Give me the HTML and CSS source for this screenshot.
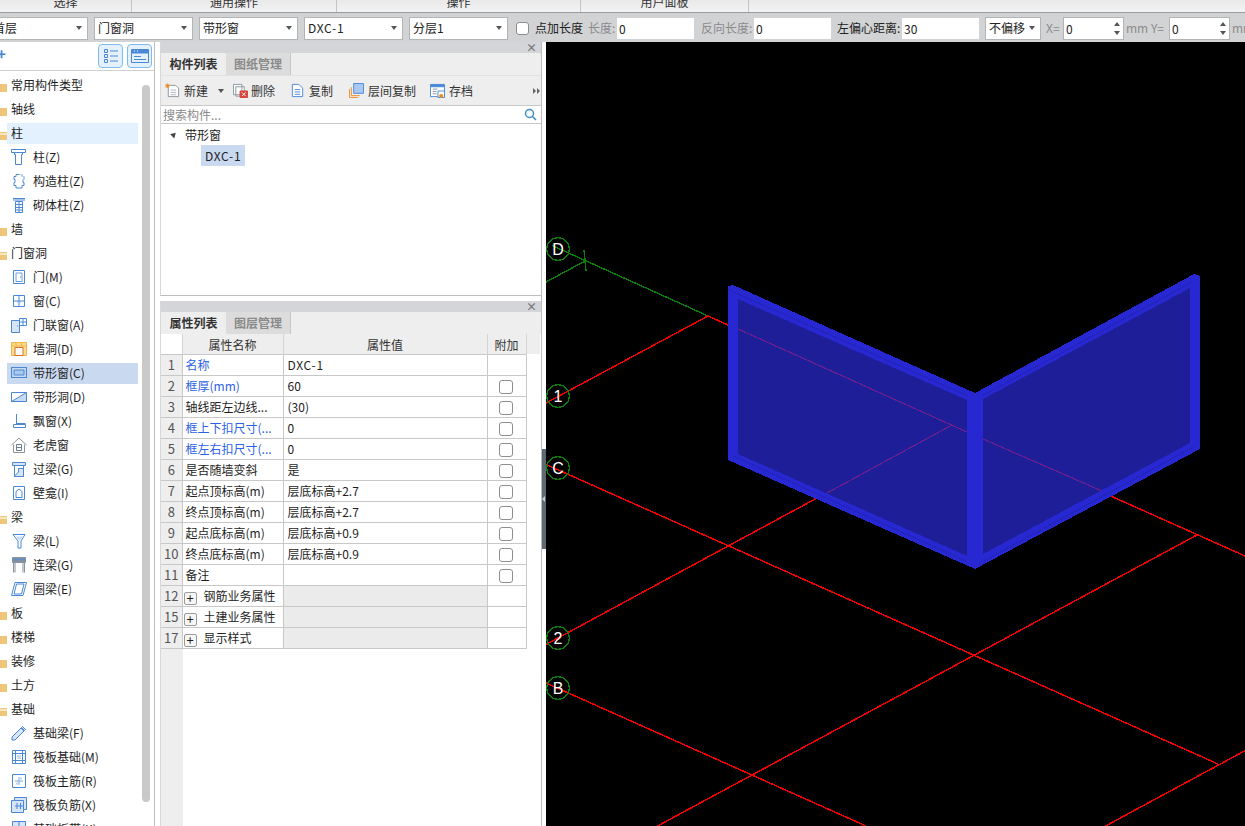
FILE: index.html
```html
<!DOCTYPE html>
<html lang="zh-CN">
<head>
<meta charset="utf-8">
<title>带形窗</title>
<link rel="stylesheet" href="styles.css">
</head>
<body>
<div class="app">
  <div class="ribbon">
    <div class="rgroup g1"><span>选择</span></div>
    <div class="rgroup g2"><span>通用操作</span></div>
    <div class="rgroup g3"><span>操作</span></div>
    <div class="rgroup g4"><span>用户面板</span></div>
  </div>
  <div class="toolbar">
    <div class="combo first"><span>首层</span><i class="caret"></i></div>
    <div class="combo"><span>门窗洞</span><i class="caret"></i></div>
    <div class="combo"><span>带形窗</span><i class="caret"></i></div>
    <div class="combo"><span class="latin">DXC-1</span><i class="caret"></i></div>
    <div class="combo"><span>分层1</span><i class="caret"></i></div>
    <i class="check tcheck"></i>
    <span class="tl l-add">点加长度</span>
    <span class="tl dim l-len">长度:</span>
    <div class="tinput w78">0</div>
    <span class="tl dim l-rev">反向长度:</span>
    <div class="tinput w78">0</div>
    <span class="tl l-off">左偏心距离:</span>
    <div class="tinput w78">30</div>
    <div class="combo small"><span>不偏移</span><i class="caret"></i></div>
    <span class="tl dim l-x">X=</span>
    <div class="tinput spin">0<b class="spinbtn"><i class="up"></i><i class="down"></i></b></div>
    <span class="tl dim l-mm">mm</span>
    <span class="tl dim l-y">Y=</span>
    <div class="tinput spin">0<b class="spinbtn"><i class="up"></i><i class="down"></i></b></div>
    <span class="tl dim l-mm">mm</span>
  </div>

  <div class="main">
    <aside class="sidebar">
      <div class="side-head">
        <span class="plus">+</span>
        <button class="vbtn"><svg width="16" height="16" viewBox="0 0 16 16" fill="none" stroke="#4a88d6"><path d="M1.500 1.500h3v3h-3zM1.500 6.500h3v3h-3zM1.500 11.500h3v3h-3zM7 3h8M7 8h8M7 13h8"/></svg></button>
        <button class="vbtn"><svg width="18" height="16" viewBox="0 0 18 16" fill="none" stroke="#4a88d6"><path d="M.5 1.500h17v13H.5z"/><path d="M1 2h16v3H1z" fill="#4a88d6"/><path d="M3 8.500h7M3 11.500h12"/><path d="M3 3h1M6 3h1" stroke="#fff"/></svg></button>
      </div>
      <div class="side-body">
        <ul class="tree">
          <li class="row"><svg class="folder" viewBox="0 0 14 11"><path d="M0 1h6l1 2h7v8H0z" fill="#efc679"/></svg>常用构件类型</li>
          <li class="row"><svg class="folder" viewBox="0 0 14 11"><path d="M0 1h6l1 2h7v8H0z" fill="#efc679"/></svg>轴线</li>
          <li class="row hl"><svg class="folder" viewBox="0 0 14 11"><path d="M0 1h6l1 2h7v8H0z" fill="#efc679"/><path d="M0 4h14v2H0z" fill="#fbe7bd"/></svg>柱</li>
          <li class="row sub"><svg class="ico" viewBox="0 0 16 16" fill="none" stroke="#4a88d6"><path d="M.5 .5h14v3H.5zM3.500 3.500v2h1v10h6v-10h1v-2"/></svg>柱(Z)</li>
          <li class="row sub"><svg class="ico" viewBox="0 0 16 16" fill="none" stroke="#4a88d6"><path d="M5 1.500h6v2h2v3h-1v3h1v3h-2v2.500H5v-2.500H3v-3h1v-3H3v-3h2z"/><path d="M8 1.500h3v2h2v3h-1" stroke="#b8d0ee"/></svg>构造柱(Z)</li>
          <li class="row sub"><svg class="ico" viewBox="0 0 16 16" fill="none" stroke="#4a88d6"><path d="M2 1.500h12M2 3h12"/><path d="M4.500 4.500h7v11h-7zM4.500 7.500h7M4.500 10.500h7M4.500 13h7M8 4.500v11"/></svg>砌体柱(Z)</li>
          <li class="row"><svg class="folder" viewBox="0 0 14 11"><path d="M0 1h6l1 2h7v8H0z" fill="#efc679"/></svg>墙</li>
          <li class="row"><svg class="folder" viewBox="0 0 14 11"><path d="M0 1h6l1 2h7v8H0z" fill="#efc679"/><path d="M0 4h14v2H0z" fill="#fbe7bd"/></svg>门窗洞</li>
          <li class="row sub"><svg class="ico" viewBox="0 0 16 16" fill="none" stroke="#4a88d6"><path d="M2.500 1.500h11v13h-11z"/><path d="M5 4h6v8.500H5z" stroke-width=".8"/><path d="M9 8h1"/></svg>门(M)</li>
          <li class="row sub"><svg class="ico" viewBox="0 0 16 16" fill="none" stroke="#4a88d6"><path d="M2.500 2.500h11v11h-11zM8 2.500v11M2.500 8h11"/><path d="M6 9h1M9 9h1" stroke="#8db4e6"/></svg>窗(C)</li>
          <li class="row sub"><svg class="ico" viewBox="0 0 16 16" fill="none" stroke="#4a88d6"><path d="M.5 3.500h8v12h-8z" fill="#d6e4f6"/><path d="M8.500 1.500h7v7h-7zM12 1.500v7M8.500 5h7"/><path d="M6 9h1"/></svg>门联窗(A)</li>
          <li class="row sub"><svg class="ico" viewBox="0 0 16 16" fill="#fbdc8e" stroke="#f2b544"><path d="M.5 1.500h15v13H.5zM.5 5h15M5 1.500V5M10.500 1.500V5"/><path d="M4 6.500h8v8H4z" fill="#fff" stroke="#d4722e"/></svg>墙洞(D)</li>
          <li class="row sub sel"><svg class="ico" viewBox="0 0 16 16" fill="none" stroke="#4a88d6"><path d="M.5 2.500h15v10H.5z" stroke-width="1.200"/><path d="M3 5h10v5H3z" fill="#a9c8ee"/></svg>带形窗(C)</li>
          <li class="row sub"><svg class="ico" viewBox="0 0 16 16" fill="none" stroke="#4a88d6"><path d="M.5 3.500h15v9H.5z"/><path d="M.5 12.500l15-9v9z" fill="#c7dbf4"/></svg>带形洞(D)</li>
          <li class="row sub"><svg class="ico" viewBox="0 0 16 16" fill="none" stroke="#4a88d6"><path d="M5.500 1v10M5.500 10.500h9M2.500 11.500h12v3h-12z"/></svg>飘窗(X)</li>
          <li class="row sub"><svg class="ico" viewBox="0 0 16 16" fill="none" stroke="#8c959e"><path d="M.5 8L8 1l7.500 7M2.500 7.500v8h11v-8"/><path d="M5.500 7.500h5v6h-5zM5.500 10.500h5" stroke="#6f8090"/></svg>老虎窗</li>
          <li class="row sub"><svg class="ico" viewBox="0 0 16 16" fill="none" stroke="#4a88d6"><path d="M1.500 1.500h13v3h-13z" fill="#d6e4f6"/><path d="M3.500 4.500v11h9v-11"/><path d="M3.500 15l4-4V7.500h5v8h-9z" fill="#d6e4f6"/></svg>过梁(G)</li>
          <li class="row sub"><svg class="ico" viewBox="0 0 16 16" fill="none" stroke="#4a88d6"><path d="M2.500 1.500h11v13h-11z"/><path d="M5 12.500V6.500L8 4l3 2.500v6z"/></svg>壁龛(I)</li>
          <li class="row"><svg class="folder" viewBox="0 0 14 11"><path d="M0 1h6l1 2h7v8H0z" fill="#efc679"/><path d="M0 4h14v2H0z" fill="#fbe7bd"/></svg>梁</li>
          <li class="row sub"><svg class="ico" viewBox="0 0 16 16" fill="none" stroke="#4a88d6"><path d="M2 1.500h12L10 8v7H7V8z"/><path d="M5 3.500h7L9 7H7.500z" fill="#c7dbf4" stroke="none"/></svg>梁(L)</li>
          <li class="row sub"><svg class="ico" viewBox="0 0 16 16" fill="none" stroke="#87929c"><path d="M1.500 .5h13v5h-13z" fill="#87929c"/><path d="M2 2.500h12" stroke="#5d8fcf" stroke-width="1.500"/><path d="M2.500 5.500v10M4 5.500v10M12 5.500v10M13.500 5.500v10"/></svg>连梁(G)</li>
          <li class="row sub"><svg class="ico" viewBox="0 0 16 16" fill="none" stroke="#4a88d6"><path d="M4 1.500h11.500L12 14.500H.5zM5.500 3h7.500L10.500 13H3z"/></svg>圈梁(E)</li>
          <li class="row"><svg class="folder" viewBox="0 0 14 11"><path d="M0 1h6l1 2h7v8H0z" fill="#efc679"/></svg>板</li>
          <li class="row"><svg class="folder" viewBox="0 0 14 11"><path d="M0 1h6l1 2h7v8H0z" fill="#efc679"/></svg>楼梯</li>
          <li class="row"><svg class="folder" viewBox="0 0 14 11"><path d="M0 1h6l1 2h7v8H0z" fill="#efc679"/></svg>装修</li>
          <li class="row"><svg class="folder" viewBox="0 0 14 11"><path d="M0 1h6l1 2h7v8H0z" fill="#efc679"/></svg>土方</li>
          <li class="row"><svg class="folder" viewBox="0 0 14 11"><path d="M0 1h6l1 2h7v8H0z" fill="#efc679"/><path d="M0 4h14v2H0z" fill="#fbe7bd"/></svg>基础</li>
          <li class="row sub"><svg class="ico" viewBox="0 0 16 16" fill="#d6e4f6" stroke="#4a88d6"><path d="M1 12l9-9 3 3-9 9H1zM11.500 1.500l3 3-1 1-3-3z"/></svg>基础梁(F)</li>
          <li class="row sub"><svg class="ico" viewBox="0 0 16 16" fill="none" stroke="#4a88d6"><path d="M1.500 1.500h13v13h-13zM1.500 4.500h13M1.500 11.500h13M4.500 1.500v13M11.500 1.500v13"/><path d="M6 7h4M6 9h4" stroke="#8db4e6"/></svg>筏板基础(M)</li>
          <li class="row sub"><svg class="ico" viewBox="0 0 16 16" fill="none" stroke="#4a88d6"><path d="M1.500 1.500h13v13h-13z"/><path d="M4 8h8M8 4v8M10 4.500v2M6 9.500v2" stroke="#7fa8dd"/></svg>筏板主筋(R)</li>
          <li class="row sub"><svg class="ico" viewBox="0 0 16 16" fill="#d6e4f6" stroke="#4a88d6"><path d="M3.500 .5h12v12h-3v3H.5V3.500h3z"/><path d="M3.500 3.500h9v9"/><path d="M4 9h8M6 6v6M9.500 6v6" fill="none"/></svg>筏板负筋(X)</li>
          <li class="row sub"><svg class="ico" viewBox="0 0 16 16" fill="#d6e4f6" stroke="#4a88d6"><path d="M1.500 .5h13v14h-13zM8 .5v14"/></svg>基础板带(K)</li>
        </ul>
        <div class="vscroll"></div>
      </div>
    </aside>

    <section class="panels">
      <div class="panel top">
        <div class="phead"><span class="x">×</span></div>
        <div class="tabs"><span class="tab on">构件列表</span><span class="tab">图纸管理</span></div>
        <div class="actions">
          <span class="act a-new"><svg class="ico15" viewBox="0 0 16 16" fill="#fff" stroke="#8a949c"><path d="M3.500 2.500h8l3 3v9h-11z"/><path d="M6 7.500h6M6 10h6M6 12.500h6" stroke="#aab2b8"/><path d="M0 3h5M2.500 .5v5M1 1l3 4M4 1L1 5" stroke="#f08a24"/></svg>新建<i class="caret dark"></i></span>
          <span class="act a-del"><svg class="ico15" viewBox="0 0 16 16" fill="#fff" stroke="#8a949c"><path d="M.5 1.500h9v11h-9zM3 4h9v10H3z"/><path d="M7.500 8.500h8v7h-8z" fill="#d8413a" stroke="#d8413a"/><path d="M9.500 10l4 4M13.500 10l-4 4" stroke="#fff"/></svg>删除</span>
          <span class="act a-copy"><svg class="ico15" viewBox="0 0 16 16" fill="#fff" stroke="#4a88d6"><path d="M2.500 1.500h7l4 4v9h-11z"/><path d="M5 7h6M5 9.500h6M5 12h6"/></svg>复制</span>
          <span class="act a-floor"><svg class="ico15" viewBox="0 0 16 16" fill="none" stroke="#f08a24"><path d="M.5 6.500v9h9M2.500 4.500v9h9"/><path d="M5 .5h10.500v10.500H5z" fill="#a9c8f2" stroke="#4a88d6"/></svg>层间复制</span>
          <span class="act a-save"><svg class="ico15" viewBox="0 0 16 16" fill="#fff" stroke="#4a88d6"><path d="M.5 1.500h15v13H.5z"/><path d="M1 2h14v2H1z" fill="#4a88d6"/><path d="M3 6.500h5M3 9h4M3 11.500h4" stroke="#8a949c"/><path d="M8.500 8.500h7v7h-7z"/><path d="M10.500 12.500h3v2.500h-3z" fill="#f08a24" stroke="#f08a24"/></svg>存档</span>
          <span class="more"><i></i><i></i></span>
        </div>
        <div class="search"><span>搜索构件...</span><svg width="13" height="13" viewBox="0 0 13 13" fill="none" stroke="#3a8fc8" stroke-width="1.500"><circle cx="5.500" cy="5.500" r="4"/><path d="M8.500 8.500l3.500 3.500"/></svg></div>
        <div class="ctree">
          <div class="cnode"><i class="tri"></i>带形窗</div>
          <div class="cleaf"><span class="latin">DXC-1</span></div>
        </div>
      </div>

      <div class="panel bottom">
        <div class="phead"><span class="x">×</span></div>
        <div class="tabs"><span class="tab on">属性列表</span><span class="tab">图层管理</span></div>
        <table class="props">
          <colgroup><col class="c0"><col class="c1"><col class="c2"><col class="c3"><col class="c4"></colgroup>
          <thead><tr><th class="blank"></th><th>属性名称</th><th>属性值</th><th>附加</th><th class="tail"></th></tr></thead>
          <tbody>
            <tr><td class="n">1</td><td class="link">名称</td><td class="v"><span class="latin">DXC-1</span></td><td></td><td class="tail"></td></tr>
            <tr><td class="n">2</td><td class="link">框厚(mm)</td><td class="v">60</td><td class="cc"><i class="check"></i></td><td class="tail"></td></tr>
            <tr><td class="n">3</td><td>轴线距左边线...</td><td class="v">(30)</td><td class="cc"><i class="check"></i></td><td class="tail"></td></tr>
            <tr><td class="n">4</td><td class="link">框上下扣尺寸(...</td><td class="v">0</td><td class="cc"><i class="check"></i></td><td class="tail"></td></tr>
            <tr><td class="n">5</td><td class="link">框左右扣尺寸(...</td><td class="v">0</td><td class="cc"><i class="check"></i></td><td class="tail"></td></tr>
            <tr><td class="n">6</td><td>是否随墙变斜</td><td class="v">是</td><td class="cc"><i class="check"></i></td><td class="tail"></td></tr>
            <tr><td class="n">7</td><td>起点顶标高(m)</td><td class="v">层底标高+2.7</td><td class="cc"><i class="check"></i></td><td class="tail"></td></tr>
            <tr><td class="n">8</td><td>终点顶标高(m)</td><td class="v">层底标高+2.7</td><td class="cc"><i class="check"></i></td><td class="tail"></td></tr>
            <tr><td class="n">9</td><td>起点底标高(m)</td><td class="v">层底标高+0.9</td><td class="cc"><i class="check"></i></td><td class="tail"></td></tr>
            <tr><td class="n">10</td><td>终点底标高(m)</td><td class="v">层底标高+0.9</td><td class="cc"><i class="check"></i></td><td class="tail"></td></tr>
            <tr><td class="n">11</td><td>备注</td><td class="v"></td><td class="cc"><i class="check"></i></td><td class="tail"></td></tr>
            <tr class="grp"><td class="n">12</td><td class="gn"><i class="pbox">+</i>钢筋业务属性</td><td class="gv"></td><td></td><td class="tail"></td></tr>
            <tr class="grp"><td class="n">15</td><td class="gn"><i class="pbox">+</i>土建业务属性</td><td class="gv"></td><td></td><td class="tail"></td></tr>
            <tr class="grp"><td class="n">17</td><td class="gn"><i class="pbox">+</i>显示样式</td><td class="gv"></td><td></td><td class="tail"></td></tr>
          </tbody>
        </table>
        <div class="gutter"></div>
      </div>
    </section>

    <div class="splitter"><div class="grip"><i></i></div></div>

    <div class="canvas">
      <svg class="cad" width="699" height="784" viewBox="546 42 699 784" shape-rendering="crispEdges">
        <defs>
          <polygon id="bub" points="11.500,0 10,5.750 5.750,10 0,11.500 -5.750,10 -10,5.750 -11.500,0 -10,-5.750 -5.750,-10 0,-11.500 5.750,-10 10,-5.750" fill="none" stroke="#0b7d0b" stroke-width="1.400"/>
        </defs>
        <g fill="none" stroke="#0b7d0b" stroke-width="1.400">
          <path d="M552 245.500L707 315.500M546 282L585 261M584 250L586 271"/>
        </g>
        <g fill="none" stroke="#f00000" stroke-width="1.500">
          <path d="M546 403L708 316L1245 556"/>
          <path d="M546 464.500L1218 764"/>
          <path d="M546 683L866 826"/>
          <path d="M546 644.500L952 425"/>
          <path d="M1197 535L657.500 826"/>
          <path d="M1245 750.700L1105.500 826"/>
        </g>
        <polygon points="728,286 733,285 975,393 1194,274 1200,276 1200,449 975,569 728,460" fill="#2828d2"/>
        <polygon points="738,299 967,400 967,556 738,454" fill="#1e1e98"/>
        <polygon points="983,399 1190,288 1190,443 983,554" fill="#1e1e98"/>
        <g fill="none" stroke="#2323bd" stroke-width="1.400">
          <path d="M729 290L968 396M982 396L1192 282M733 456L966 561M984 561L1193 447"/>
        </g>
        <g fill="none" stroke="#6b1f8e" stroke-width="1.200">
          <path d="M738 329L967 432M983 439L1102 491M827 493L952 425"/>
        </g>
        <use href="#bub" x="558" y="249"/>
        <use href="#bub" x="558" y="396"/>
        <use href="#bub" x="558" y="468"/>
        <use href="#bub" x="558" y="638"/>
        <use href="#bub" x="558" y="688"/>
        <g class="bubtext">
          <text x="558" y="255">D</text>
          <text x="558" y="402">1</text>
          <text x="558" y="474">C</text>
          <text x="558" y="644">2</text>
          <text x="558" y="694">B</text>
        </g>
      </svg>
    </div>
  </div>
</div>
</body>
</html>
```

FILE: styles.css
```css
* { box-sizing: border-box; }
html, body { margin: 0; height: 100%; overflow: hidden; }
body { font: 12px/16px "Noto Sans CJK SC", "Noto Sans", sans-serif; color: #222; background: #fff; }
i { font-style: normal; display: inline-block; }
ul { list-style: none; margin: 0; padding: 0; }
.latin { letter-spacing: .7px; }

.app { display: flex; flex-direction: column; width: 1245px; height: 826px; overflow: hidden; }

.ribbon { display: flex; height: 13px; flex: none; overflow: hidden; background: linear-gradient(#e9e9e9, #f3f3f3); border-bottom: 1px solid #9a9c9e; }
.rgroup { text-align: center; line-height: 4px; font-size: 12px; border-right: 1px solid #c4c4c4; height: 12px; color: #333; flex: none; }
.g1 { width: 132px; }
.g2 { width: 205px; }
.g3 { width: 244px; }
.g4 { width: 168px; }

.toolbar { display: flex; align-items: center; height: 29px; flex: none; background: #d2d3d5; padding-top: 1px; }
.combo { display: flex; align-items: center; justify-content: space-between; width: 99px; height: 23px; margin-right: 6px; padding: 0 5px 0 3px; background: #fff; border: 1px solid #b2b4b6; flex: none; }
.combo.first { margin-left: -11px; }
.combo.small { width: 56px; margin: 0 5px 0 5px; }
.caret { width: 0; height: 0; border: 3px solid transparent; border-top: 4px solid #555; border-bottom: 0; flex: none; }
.caret.dark { margin-left: 10px; }
.check { width: 14px; height: 14px; flex: none; border: 1px solid #8e8e8e; border-radius: 3px; background: #fff; }
.tcheck { margin-left: 2px; width: 13px; height: 13px; }
.tl { flex: none; }
.dim { color: #8b8b8b; }
.l-add { margin-left: 6px; width: 53px; }
.l-len { width: 28px; }
.l-rev { width: 55px; margin-left: 6px; margin-right: -3px; }
.l-off { width: 64px; margin-left: 5px; white-space: nowrap; }
.l-x { width: 17px; }
.l-y { width: 18px; margin-left: 6px; }
.l-mm { width: 19px; margin-left: 2px; }
.tinput { flex: none; height: 23px; line-height: 21px; padding-left: 2px; background: #fff; border: 1px solid #d2d3d5; }
.w78 { width: 79px; }
.spin { width: 61px; border-color: #b2b4b6; display: flex; justify-content: space-between; }
.spinbtn { display: flex; flex-direction: column; justify-content: space-between; width: 12px; padding: 4px 3px; }
.up { width: 0; height: 0; border: 3px solid transparent; border-bottom: 4px solid #555; border-top: 0; }
.down { width: 0; height: 0; border: 3px solid transparent; border-top: 4px solid #555; border-bottom: 0; }

.main { display: flex; flex: 1; min-height: 0; }

.sidebar { width: 160px; flex: none; display: flex; flex-direction: column; background: #fff; border-right: 1px solid #fff; }
.side-head { height: 28px; flex: none; display: flex; align-items: center; gap: 4px; padding-left: 98px; position: relative; margin-right: 4px; border-right: 1px solid #bdbdbd; }
.plus { position: absolute; left: -3px; top: 3px; color: #3f86d6; font-size: 15px; font-weight: 700; line-height: 18px; }
.vbtn { width: 25px; height: 24px; padding: 0; display: flex; align-items: center; justify-content: center; background: #e4f1fd; border: 1px solid #7cbcf2; border-radius: 4px; }
.side-body { flex: 1; min-height: 0; display: flex; margin-right: 4px; border-right: 1px solid #bdbdbd; border-top: 1px solid #cfcfcf; overflow: hidden; }
.tree { width: 142px; flex: none; padding: 4px 4px 0 7px; display: flex; flex-direction: column; gap: 3px; }
.row { display: flex; align-items: center; flex: none; height: 21px; padding: 0 0 2px 4px; color: #1e1e1e; white-space: nowrap; }
.hl { background: #e3f0fd; }
.sel { background: #c9d9f0; }
.folder { width: 14px; height: 11px; margin: 4px 4px 0 -18px; flex: none; }
.ico { width: 16px; height: 16px; margin-right: 6px; flex: none; }
.vscroll { width: 8px; height: 717px; margin-top: 14px; background: #c9c9c9; border-radius: 4px; flex: none; }

.panels { width: 382px; flex: none; display: flex; flex-direction: column; background: #fff; border-right: 1px solid #bdbdbd; }
.panel { display: flex; flex-direction: column; border-left: 1px solid #d8d8d8; }
.panel.top { height: 254px; flex: none; border-bottom: 1px solid #bdbdbd; margin-bottom: 5px; }
.panel.bottom { flex: 1; min-height: 0; }
.phead { height: 11px; flex: none; background: #d3d5d9; text-align: right; padding-right: 4px; line-height: 10px; }
.x { color: #777; font-size: 11px; font-weight: 700; }
.tabs { height: 22px; flex: none; display: flex; background: #eeeeee; }
.tab { width: 65px; text-align: center; line-height: 22px; color: #8a8a8a; background: #dcdcdc; border-right: 1px solid #c8c8c8; font-weight: 700; }
.tab.on { color: #333; background: #eee; border-right: 0; }
.actions { height: 30px; flex: none; display: flex; align-items: center; background: #eeeeee; padding-left: 4px; border-top: 1px solid #e2e2e2; position: relative; color: #333; }
.act { display: flex; align-items: center; flex: none; white-space: nowrap; }
.ico15 { width: 15px; height: 15px; margin-right: 4px; flex: none; }
.a-del { margin-left: 9px; }
.a-del .ico15 { margin-right: 3px; }
.a-copy { margin-left: 15px; }
.a-floor { margin-left: 16px; }
.a-save { margin-left: 14px; }
.more { position: absolute; right: 1px; top: 12px; display: flex; gap: 1px; }
.more i { width: 0; height: 0; border: 3px solid transparent; border-left: 3px solid #666; border-right: 0; }
.search { height: 19px; flex: none; display: flex; align-items: center; justify-content: space-between; padding: 0 4px 0 2px; color: #8a8a8a; background: #fff; border-top: 1px solid #c8c8c8; border-bottom: 1px solid #c8c8c8; }
.cnode { height: 21px; line-height: 21px; padding-left: 10px; display: flex; align-items: center; }
.tri { width: 0; height: 0; margin-right: 8px; border: 3px solid transparent; border-bottom: 5px solid #444; border-top: 0; transform: rotate(45deg); }
.cleaf { width: 44px; height: 21px; line-height: 21px; margin-left: 40px; padding-left: 4px; background: #c9d9f0; color: #222; }

.props { border-collapse: collapse; table-layout: fixed; width: 379px; flex: none; }
.c0 { width: 21px; }
.c1 { width: 101px; }
.c2 { width: 204px; }
.c3 { width: 39px; }
.c4 { width: 14px; }
.props th { height: 20px; padding: 2px 0 0; font-weight: 400; background: #eeeeee; border: 1px solid #d4d4d4; border-width: 0 1px; color: #333; }
.props th.blank { background: #fff; border: 0; }
.props th.tail { border: 0; }
.props td { height: 21px; padding: 0 0 0 3px; border: 1px solid #c8c8c8; white-space: nowrap; overflow: hidden; color: #1e1e1e; }
.props td.v { padding-left: 4px; }
.props td.n { padding: 0; text-align: center; background: #eeeeee; color: #555; font-size: 13px; border-left: 0; }
.props td.link { color: #2c62e6; }
.props td.gn { padding-top: 2px; }
.props td.cc { padding: 0 2px 0 0; text-align: center; }
.props td.cc .check { vertical-align: middle; }
.props td.tail { border: 0; border-left: 1px solid #c8c8c8; }
.props td.gv { background: #ebebeb; }
.pbox { width: 13px; height: 13px; margin: 0 7px 0 -2px; border: 1px solid #9a9a9a; border-radius: 2px; line-height: 10px; text-align: center; background: #f6f6f6; vertical-align: -2px; font-size: 13px; }
.gutter { flex: 1; width: 22px; background: #eeeeee; }

.splitter { width: 4px; flex: none; background: #fff; }
.grip { width: 4px; height: 100px; margin-top: 407px; background: #5f6973; display: flex; align-items: center; }
.grip i { width: 0; height: 0; border: 3px solid transparent; border-right: 3px solid #c8ccd0; border-left: 0; }

.canvas { flex: 1; min-width: 0; background: #000; overflow: hidden; }
.cad { display: block; }
.bubtext text { fill: #fff; font: 16px "Liberation Sans", sans-serif; text-anchor: middle; }
```
